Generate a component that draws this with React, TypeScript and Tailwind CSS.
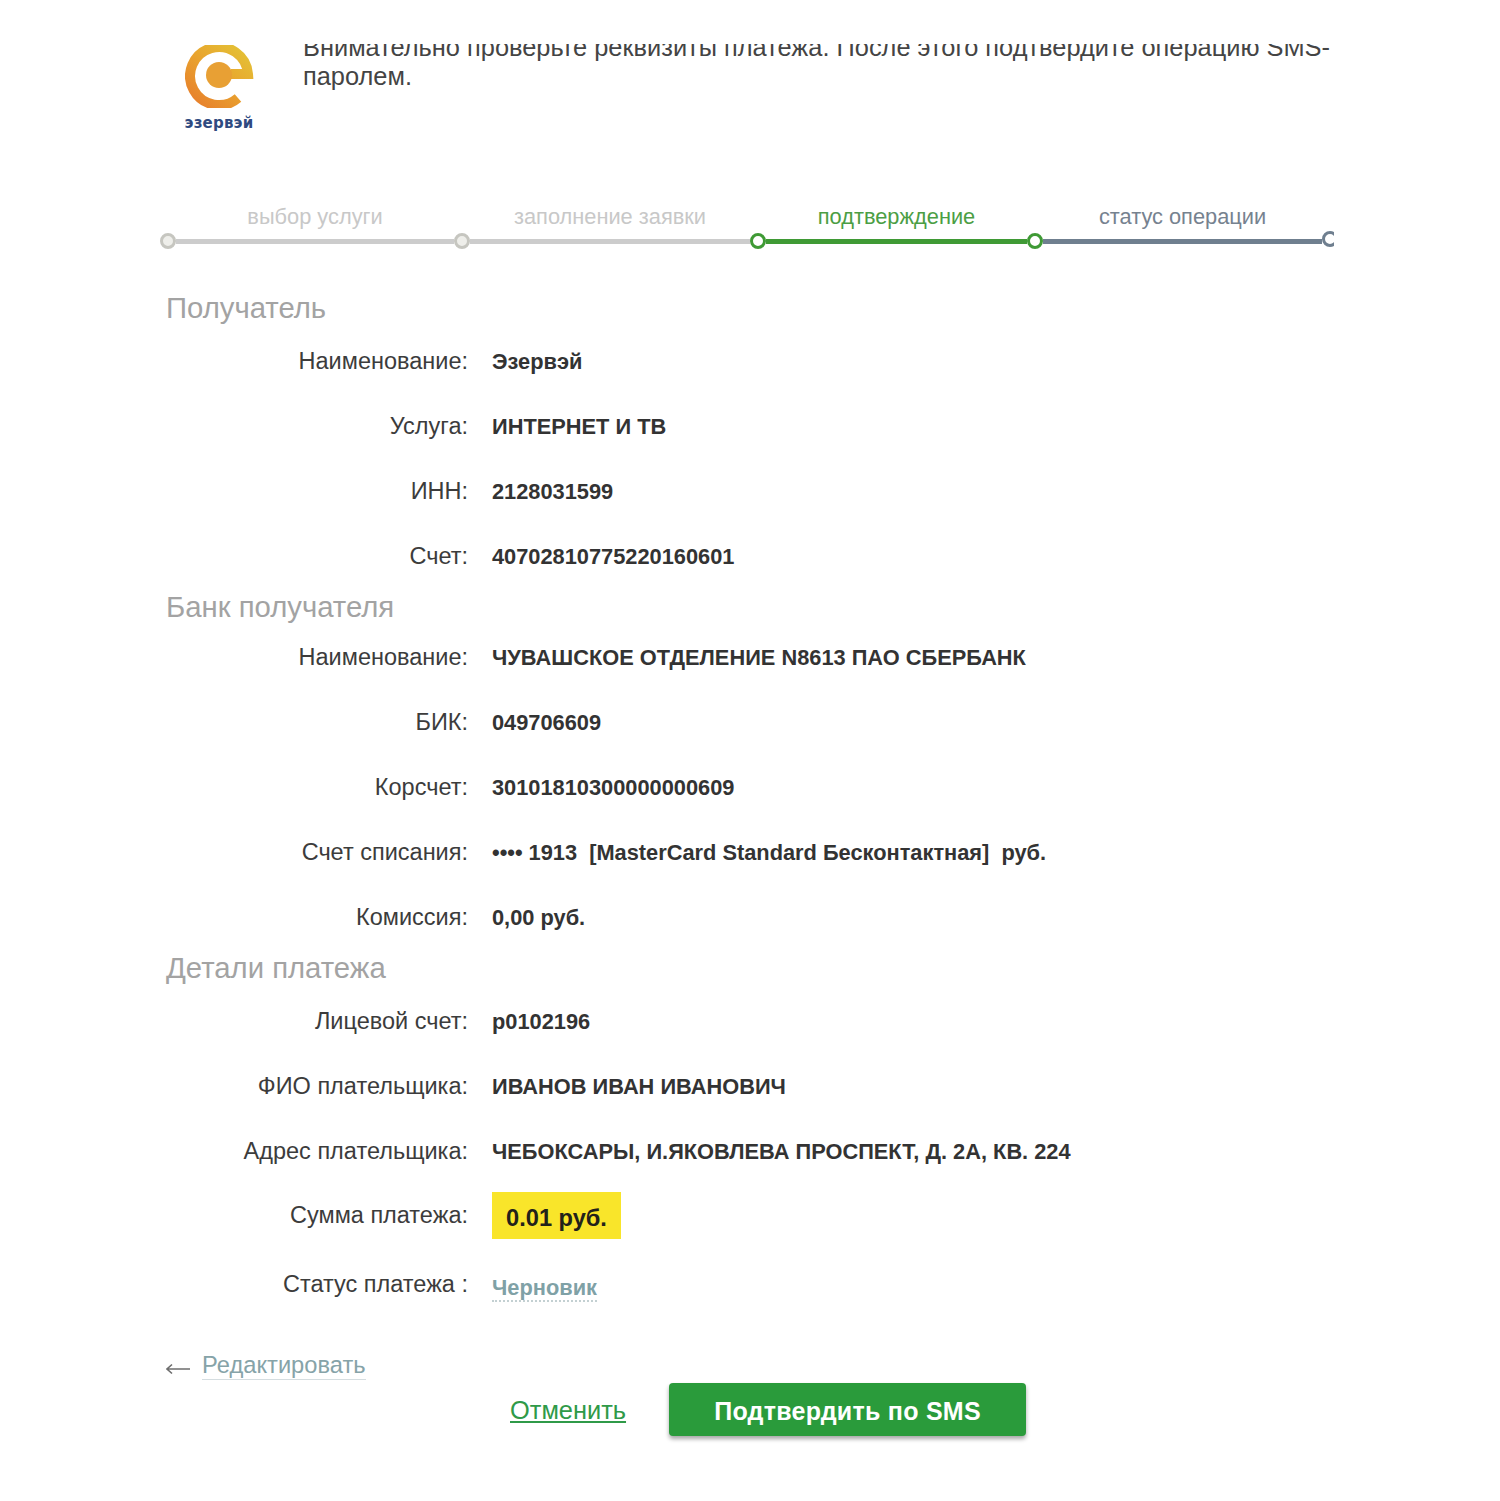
import React from 'react';

const FONT = '[font-family:"Liberation_Sans",Arial,sans-serif]';

const recipient = [
  ['Наименование:', 'Эзервэй'],
  ['Услуга:', 'ИНТЕРНЕТ И ТВ'],
  ['ИНН:', '2128031599'],
  ['Счет:', '40702810775220160601'],
];

const bank = [
  ['Наименование:', 'ЧУВАШСКОЕ ОТДЕЛЕНИЕ N8613 ПАО СБЕРБАНК'],
  ['БИК:', '049706609'],
  ['Корсчет:', '30101810300000000609'],
  ['Счет списания:', '•••• 1913  [MasterCard Standard Бесконтактная]  руб.'],
  ['Комиссия:', '0,00 руб.'],
];

const details = [
  ['Лицевой счет:', 'р0102196'],
  ['ФИО плательщика:', 'ИВАНОВ ИВАН ИВАНОВИЧ'],
  ['Адрес плательщика:', 'ЧЕБОКСАРЫ, И.ЯКОВЛЕВА ПРОСПЕКТ, Д. 2А, КВ. 224'],
];

function Row({ label, value }: { label: string; value: string }) {
  return (
    <div className="flex h-[65px] items-center">
      <div className="w-[308px] shrink-0 text-right text-[23.5px] text-[#3c3c3c]">{label}</div>
      <div className="ml-[24px] whitespace-pre pt-[2px] text-[21.8px] font-bold text-[#333]">{value}</div>
    </div>
  );
}

function Step({ label, width, state }: { label: string; width: string; state: 'done' | 'active' | 'next' }) {
  const text = state === 'done' ? 'text-[#c8c8c8]' : state === 'active' ? 'text-[#4b9e44]' : 'text-[#76828f]';
  const ring = state === 'done' ? 'border-[#c6c6c0] bg-[#eeeeea]' : 'border-[#3f9a35] bg-white';
  const line = state === 'done' ? 'bg-[#cccccc]' : state === 'active' ? 'bg-[#3f9a35]' : 'bg-[#6f7f8f]';
  return (
    <div className={`flex shrink-0 flex-col ${width}`}>
      <div className="h-[33px] pl-4 text-center text-[21.8px] leading-[33px]">
        <span className={text}>{label}</span>
      </div>
      <div className="flex h-4 items-center">
        <div className={`h-4 w-4 shrink-0 rounded-full border-[3px] ${ring}`} />
        <div className={`h-[5px] flex-1 ${line}`} />
      </div>
    </div>
  );
}

function Logo() {
  return (
    <div className="flex w-[70px] flex-col items-center">
      <svg width="70" height="63" viewBox="0 0 70 63" className="block">
        <defs>
          <linearGradient id="ring" x1="60" y1="0" x2="10" y2="60" gradientUnits="userSpaceOnUse">
            <stop offset="0" stopColor="#e3c436" />
            <stop offset="0.5" stopColor="#e9a42e" />
            <stop offset="1" stopColor="#e77f2c" />
          </linearGradient>
        </defs>
        <path d="M46 29 H63 A29 29 0 1 0 53 53" fill="none" stroke="url(#ring)" strokeWidth="10" />
        <circle cx="34" cy="30" r="13" fill="#e8a034" />
      </svg>
      <div className="mr-[2px] mt-[5px] text-[15px] font-bold leading-[20px] tracking-[0.2px] text-[#2f4a80] [font-family:'DejaVu_Sans',sans-serif] text-nowrap">эзервэй</div>
    </div>
  );
}

export default function App() {
  return (
    <div className={`h-[1501px] w-[1500px] overflow-hidden bg-white pl-[160px] pt-[44px] ${FONT}`}>
      <div className="w-[1174px] overflow-hidden">
        {/* Header, first line is cut by the top of the frame */}
        <div className="flex h-[156px] items-start">
          <div className="ml-[25px] mt-[1px] shrink-0">
            <Logo />
          </div>
          <div className="ml-[48px] h-[60px] flex-1 overflow-hidden">
            <p className="mt-[-11px] text-[25.4px] leading-[29px] text-[#444]">
              Внимательно проверьте реквизиты платежа. После этого подтвердите операцию SMS-<wbr />паролем.
            </p>
          </div>
        </div>

        {/* Stepper */}
        <div className="flex w-[1174px]">
          <Step label="выбор услуги" width="w-[294px]" state="done" />
          <Step label="заполнение заявки" width="w-[296px]" state="done" />
          <Step label="подтверждение" width="w-[277px]" state="active" />
          <Step label="статус операции" width="w-[295px]" state="next" />
          <div className="flex w-[12px] flex-col overflow-hidden">
            <div className="h-[31px]" />
            <div className="h-4 w-4 shrink-0 rounded-full border-[3px] border-[#6f7f8f] bg-white" />
          </div>
        </div>

        <h2 className="mt-[41px] flex h-[36px] items-center pl-[6px] text-[29.3px] font-normal text-[#a3a3a3]">Получатель</h2>
        <div className="mt-[3px]">
          {recipient.map(([l, v]) => (
            <Row key={l} label={l} value={v} />
          ))}
        </div>

        <h2 className="flex h-[36px] items-center pl-[6px] text-[29.3px] font-normal text-[#a3a3a3]">Банк получателя</h2>
        {bank.map(([l, v]) => (
          <Row key={l} label={l} value={v} />
        ))}

        <h2 className="flex h-[36px] items-center pl-[6px] text-[29.3px] font-normal text-[#a3a3a3]">Детали платежа</h2>
        <div className="mt-[3px]">
          {details.map(([l, v]) => (
            <Row key={l} label={l} value={v} />
          ))}
        </div>

        {/* Amount */}
        <div className="mt-[8px] flex">
          <div className="w-[308px] shrink-0 pt-[6px] text-right text-[23.5px] text-[#3c3c3c]">Сумма платежа:</div>
          <div className="ml-[24px] flex h-[47px] w-[129px] items-center justify-center bg-[#f9e52a] pt-[7px] text-[23.6px] font-bold text-[#22221a]">0.01 руб.</div>
        </div>

        {/* Status */}
        <div className="mt-[28px] flex">
          <div className="w-[308px] shrink-0 text-right text-[23.5px] text-[#3c3c3c]">Статус платежа :</div>
          <div className="ml-[24px] mt-[9px] border-b-2 border-dotted border-[#c3d0d2] text-[21.8px] font-bold leading-[24px] text-[#7fa1a6]">Черновик</div>
        </div>

        {/* Edit link */}
        <div className="mt-[49px] flex items-center pl-[6px]">
          <svg width="24" height="12" viewBox="0 0 24 12" className="mt-[6px] shrink-0">
            <path d="M24 6 H1 M6 1.5 L1 6 L6 10.5" fill="none" stroke="#6e6e6e" strokeWidth="1.6" />
          </svg>
          <span className="ml-[12px] border-b border-[#d5dde0] text-[23.7px] leading-[28px] text-[#86a3a8]">Редактировать</span>
        </div>

        {/* Actions */}
        <div className="mt-[3px] flex items-center pb-[8px] pl-[350px]">
          <span className="text-[25.4px] text-[#2f9a48] underline">Отменить</span>
          <button className="ml-[43px] h-[53px] w-[357px] rounded-[4px] bg-[#2a9b3b] pt-[3px] text-[25px] font-bold tracking-[0.27px] text-white shadow-[0_3px_4px_rgba(0,0,0,0.35)]">
            Подтвердить по SMS
          </button>
        </div>
      </div>
    </div>
  );
}
